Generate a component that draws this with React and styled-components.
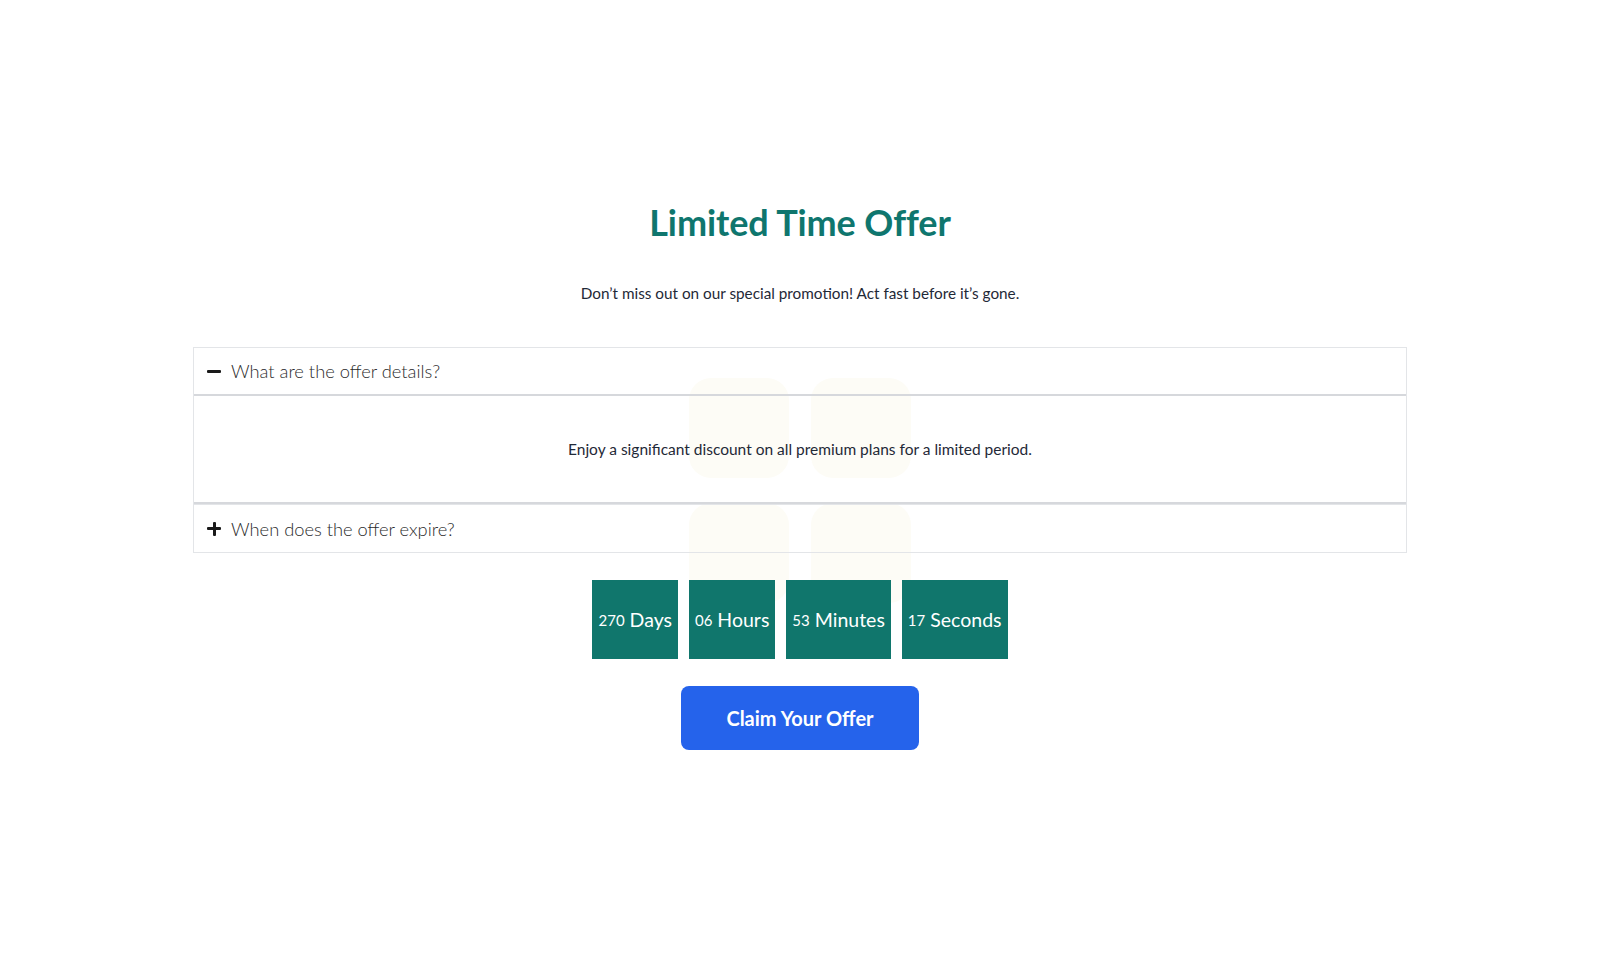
import React, { useState } from "react";
import styled, { createGlobalStyle } from "styled-components";

const Global = createGlobalStyle`
  html, body { margin: 0; padding: 0; background: #ffffff; }
  body { font-family: "Lato", "Inter", sans-serif; color: #1f2937; }
  * { box-sizing: border-box; }
`;

const Page = styled.main`
  position: relative;
  min-height: 978px;
  display: flex;
  flex-direction: column;
  align-items: center;
  padding-top: 200px;
`;

const Ghosts = styled.div`
  position: absolute;
  top: 378px;
  left: 50%;
  transform: translateX(-50%);
  display: grid;
  grid-template-columns: 100px 100px;
  gap: 25px 22px;
  z-index: 0;
  pointer-events: none;
`;

const Ghost = styled.div`
  width: 100px;
  height: 100px;
  border-radius: 22px;
  background: #fdfcf6;
`;

const Title = styled.h1`
  position: relative;
  z-index: 1;
  margin: 0;
  font-family: "Lato", sans-serif;
  font-weight: 700;
  font-size: 36px;
  line-height: 44px;
  color: #0f766e;
  letter-spacing: -0.1px;
`;

const Subtitle = styled.p`
  position: relative;
  z-index: 1;
  margin: 37px 0 0;
  font-size: 15.3px;
  line-height: 24px;
  color: #1f2937;
`;

const Accordion = styled.div`
  position: relative;
  z-index: 1;
  margin-top: 42px;
  width: 1214px;
  display: flex;
  flex-direction: column;
`;

const Item = styled.div`
  border: 1px solid #e3e5e8;
  border-top: ${(p) => (p.$first ? "1px solid #e3e5e8" : "none")};
`;

const Header = styled.button`
  display: flex;
  align-items: center;
  gap: 10px;
  width: 100%;
  height: ${(p) => (p.$first ? "48px" : "47px")};
  padding: 0 13px;
  border: none;
  border-bottom: ${(p) => (p.$open ? "2px solid #d6d8dc" : "none")};
  background: transparent;
  font-family: "Lato", sans-serif;
  font-weight: 300;
  font-size: 18.3px;
  color: #2b2b2b;
  text-align: left;
  cursor: pointer;
`;

const Sign = styled.span`
  position: relative;
  width: 14px;
  height: 14px;
  flex: none;
  &::before, &::after {
    content: "";
    position: absolute;
    background: #1a1a1a;
    border-radius: 1px;
  }
  &::before {
    left: 0; right: 0; top: 5.5px; height: 3px;
  }
  &::after {
    display: ${(p) => (p.$open ? "none" : "block")};
    top: 0; bottom: 0; left: 5.5px; width: 3px;
  }
`;

const Panel = styled.div`
  height: 108px;
  border-bottom: 2px solid #d6d8dc;
  display: flex;
  align-items: center;
  justify-content: center;
  font-size: 15.5px;
  color: #1f2937;
`;

const Countdown = styled.div`
  position: relative;
  z-index: 1;
  margin-top: 27px;
  display: flex;
  gap: 11px;
`;

const Unit = styled.div`
  height: 79px;
  padding: 0 6px;
  background: #10766c;
  color: #ffffff;
  display: flex;
  align-items: center;
  gap: 5px;
  white-space: nowrap;
`;

const Num = styled.span`
  font-size: 15px;
  font-weight: 400;
`;

const Label = styled.span`
  font-size: 19.5px;
  font-weight: 400;
`;

const Claim = styled.button`
  position: relative;
  z-index: 1;
  margin-top: 27px;
  width: 238px;
  height: 64px;
  border: none;
  border-radius: 8px;
  background: #2563eb;
  color: #ffffff;
  font-family: "Lato", sans-serif;
  font-weight: 700;
  font-size: 20px;
  cursor: pointer;
`;

export default function App() {
  const [open, setOpen] = useState(0);
  const items = [
    { q: "What are the offer details?", a: "Enjoy a significant discount on all premium plans for a limited period." },
    { q: "When does the offer expire?", a: "The offer ends when the countdown reaches zero." },
  ];
  const units = [
    ["270", "Days"],
    ["06", "Hours"],
    ["53", "Minutes"],
    ["17", "Seconds"],
  ];
  return (
    <>
      <Global />
      <Page>
        <Ghosts>
          <Ghost /><Ghost /><Ghost /><Ghost />
        </Ghosts>
        <Title>Limited Time Offer</Title>
        <Subtitle>Don’t miss out on our special promotion! Act fast before it’s gone.</Subtitle>
        <Accordion>
          {items.map((it, i) => (
            <Item key={i} $first={i === 0}>
              <Header $first={i === 0} $open={open === i} onClick={() => setOpen(open === i ? -1 : i)}>
                <Sign $open={open === i} />
                {it.q}
              </Header>
              {open === i && <Panel>{it.a}</Panel>}
            </Item>
          ))}
        </Accordion>
        <Countdown>
          {units.map(([n, l]) => (
            <Unit key={l}>
              <Num>{n}</Num>
              <Label>{l}</Label>
            </Unit>
          ))}
        </Countdown>
        <Claim>Claim Your Offer</Claim>
      </Page>
    </>
  );
}
